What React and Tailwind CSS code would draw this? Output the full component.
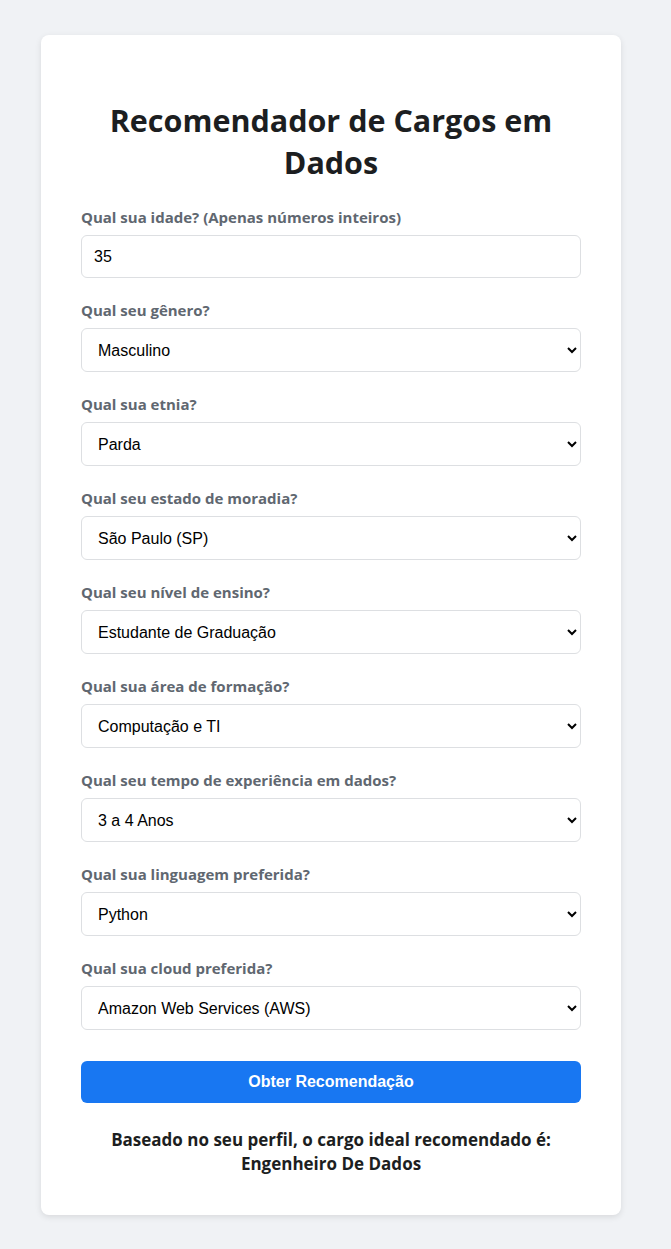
import { useState } from 'react'

const fields = [
  { id: 'genero', label: 'Qual seu gênero?', value: 'Masculino', options: ['Masculino', 'Feminino', 'Prefiro não informar'] },
  { id: 'etnia', label: 'Qual sua etnia?', value: 'Parda', options: ['Branca', 'Parda', 'Preta', 'Amarela', 'Indígena'] },
  { id: 'estado', label: 'Qual seu estado de moradia?', value: 'São Paulo (SP)', options: ['São Paulo (SP)', 'Rio de Janeiro (RJ)', 'Minas Gerais (MG)'] },
  { id: 'ensino', label: 'Qual seu nível de ensino?', value: 'Estudante de Graduação', options: ['Estudante de Graduação', 'Graduação/Bacharelado', 'Pós-graduação', 'Mestrado', 'Doutorado'] },
  { id: 'formacao', label: 'Qual sua área de formação?', value: 'Computação e TI', options: ['Computação e TI', 'Engenharias', 'Estatística/Matemática', 'Outras'] },
  { id: 'experiencia', label: 'Qual seu tempo de experiência em dados?', value: '3 a 4 Anos', options: ['Menos de 1 Ano', '1 a 2 Anos', '3 a 4 Anos', '5 a 6 Anos', 'Mais de 6 Anos'] },
  { id: 'linguagem', label: 'Qual sua linguagem preferida?', value: 'Python', options: ['Python', 'R', 'SQL', 'Scala'] },
  { id: 'cloud', label: 'Qual sua cloud preferida?', value: 'Amazon Web Services (AWS)', options: ['Amazon Web Services (AWS)', 'Google Cloud (GCP)', 'Microsoft Azure'] },
]

const labelClass = "mb-2 block text-[15px] leading-5 font-bold text-[#606770] font-['Open_Sans',sans-serif]"
const controlClass = "block w-full rounded-md border border-[#dddfe2] bg-white px-3 text-base text-black font-['Liberation_Sans',Arial,sans-serif] outline-none"

export default function App(){
  const [values, setValues] = useState(() => Object.fromEntries(fields.map((f) => [f.id, f.value])))
  const [idade, setIdade] = useState('35')

  return (
    <div className="min-h-[1249px] bg-[#f0f2f5] pt-[35px] pb-[34px]">
      <div className="ml-[41px] w-[580px] rounded-lg bg-white px-10 pt-10 pb-[39px] shadow-[0_2px_6px_rgba(0,0,0,0.1)]">
        <h1 className="mt-[24px] mb-[24px] text-center text-[30.5px] leading-[42px] font-bold text-[#1c1e21] font-['Open_Sans',sans-serif]">
          Recomendador de Cargos em Dados
        </h1>

        <div className="mb-[22px]">
          <label htmlFor="idade" className={labelClass}>Qual sua idade? (Apenas números inteiros)</label>
          <input id="idade" type="text" value={idade} onChange={(e) => setIdade(e.target.value)} className={`h-[43px] ${controlClass}`} />
        </div>

        {fields.map((field) => (
          <div key={field.id} className="mb-[22px]">
            <label htmlFor={field.id} className={labelClass}>{field.label}</label>
            <select
              id={field.id}
              value={values[field.id]}
              onChange={(e) => setValues({ ...values, [field.id]: e.target.value })}
              className={`h-[44px] ${controlClass}`}
            >
              {field.options.map((option) => (
                <option key={option} value={option}>{option}</option>
              ))}
            </select>
          </div>
        ))}

        <button type="button" className="mt-[9px] h-[42px] w-full rounded-md bg-[#1877f2] text-base font-bold text-white font-['Liberation_Sans',Arial,sans-serif]">
          Obter Recomendação
        </button>

        <p className="mt-[25px] text-center text-[17px] leading-6 font-bold text-[#1c1e21] font-['Open_Sans',sans-serif]">
          Baseado no seu perfil, o cargo ideal recomendado é:
          <br />
          Engenheiro De Dados
        </p>
      </div>
    </div>
  )
}
